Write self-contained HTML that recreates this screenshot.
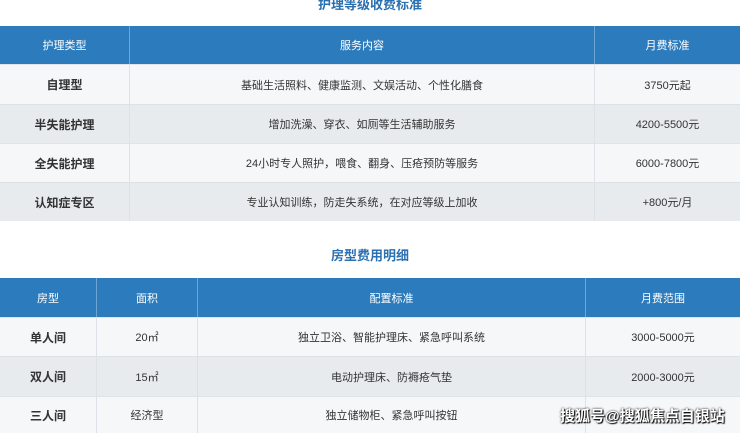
<!DOCTYPE html>
<html><head><meta charset="utf-8"><style>
*{margin:0;padding:0;box-sizing:border-box}
body{width:740px;height:433px;overflow:hidden;background:#fff;font-family:"Liberation Sans","Noto Sans CJK SC",sans-serif;color:#333;position:relative}
.t{position:absolute;left:0;width:740px;text-align:center;color:#2a6fb0;font-weight:bold;font-size:13px}
.r{position:absolute;left:0;width:740px;display:flex}
.r div{display:flex;align-items:center;justify-content:center;font-size:11px;border-right:1px solid #dde2e8;height:100%}
.r div:last-child{border-right:none}
.h{background:#2b7bbd;color:#fff}
.h div{color:#fff;border-right:1px solid #6fa3d3;font-size:11px}
.a{background:#f6f7f9;border-top:1px solid #e0e4e8}
.b{background:#e8ebee;border-top:1px solid #dde1e6}
.bold{font-weight:bold;font-size:12px!important;color:#333}
</style></head><body>
<div class="t" style="top:-6px">护理等级收费标准</div>
<div class="r h" style="top:26px;height:38px"><div style="width:130px">护理类型</div><div style="width:465px">服务内容</div><div style="width:145px">月费标准</div></div>
<div class="r a" style="top:64px;height:40px"><div class="bold" style="width:130px">自理型</div><div style="width:465px">基础生活照料、健康监测、文娱活动、个性化膳食</div><div style="width:145px">3750元起</div></div>
<div class="r b" style="top:104px;height:39px"><div class="bold" style="width:130px">半失能护理</div><div style="width:465px">增加洗澡、穿衣、如厕等生活辅助服务</div><div style="width:145px">4200-5500元</div></div>
<div class="r a" style="top:143px;height:39px"><div class="bold" style="width:130px">全失能护理</div><div style="width:465px">24小时专人照护，喂食、翻身、压疮预防等服务</div><div style="width:145px">6000-7800元</div></div>
<div class="r b" style="top:182px;height:39px"><div class="bold" style="width:130px">认知症专区</div><div style="width:465px">专业认知训练，防走失系统，在对应等级上加收</div><div style="width:145px">+800元/月</div></div>
<div class="t" style="top:245px">房型费用明细</div>
<div class="r h" style="top:278px;height:39px"><div style="width:97px">房型</div><div style="width:101px">面积</div><div style="width:388px">配置标准</div><div style="width:154px">月费范围</div></div>
<div class="r a" style="top:317px;height:39px"><div class="bold" style="width:97px">单人间</div><div style="width:101px">20㎡</div><div style="width:388px">独立卫浴、智能护理床、紧急呼叫系统</div><div style="width:154px">3000-5000元</div></div>
<div class="r b" style="top:356px;height:40px"><div class="bold" style="width:97px">双人间</div><div style="width:101px">15㎡</div><div style="width:388px">电动护理床、防褥疮气垫</div><div style="width:154px">2000-3000元</div></div>
<div class="r a" style="top:396px;height:37px"><div class="bold" style="width:97px">三人间</div><div style="width:101px">经济型</div><div style="width:388px">独立储物柜、紧急呼叫按钮</div><div style="width:154px"></div></div>
<div style="position:absolute;left:560px;top:405px;font-size:15px;font-weight:bold;color:#fff;text-shadow:0 0 2px #000,1px 1px 1px #000">搜狐号@搜狐焦点自银站</div>
</body></html>
